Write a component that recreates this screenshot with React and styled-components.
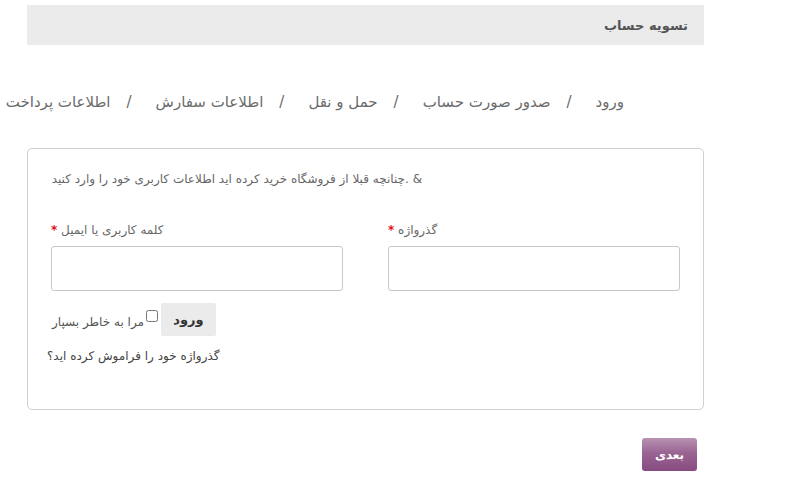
import styled, { createGlobalStyle } from 'styled-components';

const GlobalStyle = createGlobalStyle`
    html, body {
        margin: 0;
        padding: 0;
        background: #ffffff;
    }
    body {
        font-family: Tahoma, "DejaVu Sans", sans-serif;
        color: #666;
    }
`;

const steps = ['ورود', 'صدور صورت حساب', 'حمل و نقل', 'اطلاعات سفارش', 'اطلاعات پرداخت'];

const App = () => {
    return (
        <Page>
            <GlobalStyle />
            <TitleBar>
                <h2>تسویه حساب</h2>
            </TitleBar>

            <Steps>
                {steps.map((s, i) => (
                    <Step key={s}>
                        {i > 0 && <Sep>/</Sep>}
                        <span>{s}</span>
                    </Step>
                ))}
            </Steps>

            <Box>
                <Intro>&amp; .چنانچه قبلا از فروشگاه خرید کرده اید اطلاعات کاربری خود را وارد کنید</Intro>
                <Fields>
                    <Field>
                        <Label><Star>*</Star> کلمه کاربری یا ایمیل</Label>
                        <Input type="text" />
                    </Field>
                    <Field>
                        <Label><Star>*</Star> گذرواژه</Label>
                        <Input type="password" />
                    </Field>
                </Fields>
                <LoginRow>
                    <span>مرا به خاطر بسپار</span>
                    <Check type="checkbox" />
                    <LoginButton>ورود</LoginButton>
                </LoginRow>
                <Forgot href="#">گذرواژه خود را فراموش کرده اید؟</Forgot>
            </Box>

            <Footer>
                <Next>بعدی</Next>
            </Footer>
        </Page>
    );
};

const Page = styled.div`
    width: 811px;
    padding-top: 5px;
`;

const TitleBar = styled.div`
    margin-left: 27px;
    width: 677px;
    height: 40px;
    background: #ebebeb;
    display: flex;
    align-items: center;
    justify-content: flex-end;
    h2 {
        margin: 0 16px 0 0;
        font-size: 13px;
        font-weight: bold;
        color: #555;
        direction: rtl;
    }
`;

const Steps = styled.div`
    display: flex;
    flex-direction: row-reverse;
    justify-content: flex-start;
    width: 624px;
    margin-top: 40px;
    height: 34px;
    align-items: center;
    white-space: nowrap;
    font-size: 15px;
    color: #6b6b6b;
`;

const Step = styled.div`
    display: flex;
    flex-direction: row-reverse;
    align-items: center;
    span {
        direction: rtl;
    }
`;

const Sep = styled.i`
    font-style: normal;
    margin: 0 24px 0 16px;
    font-size: 15px;
`;

const Box = styled.div`
    margin: 29px 0 0 27px;
    width: 677px;
    height: 262px;
    box-sizing: border-box;
    border: 1px solid #cfcfcf;
    border-radius: 5px;
    padding: 21px 23px 0 23px;
`;

const Intro = styled.p`
    margin: 0;
    width: 371px;
    direction: rtl;
    text-align: right;
    font-size: 12px;
    line-height: 18px;
    color: #666;
`;

const Fields = styled.div`
    display: grid;
    grid-template-columns: 292px 292px;
    column-gap: 45px;
    margin-top: 33px;
`;

const Field = styled.div`
    display: flex;
    flex-direction: column;
`;

const Label = styled.label`
    font-size: 12px;
    line-height: 18px;
    color: #666;
    margin-bottom: 7px;
`;

const Star = styled.span`
    color: #e0101a;
    font-weight: bold;
`;

const Input = styled.input`
    box-sizing: border-box;
    width: 292px;
    height: 45px;
    border: 1px solid #c8c8c8;
    border-radius: 3px;
    background: #fff;
    outline: none;
`;

const LoginRow = styled.div`
    display: flex;
    align-items: center;
    margin-top: 12px;
    margin-left: 1px;
    font-size: 12px;
    color: #555;
    span {
        direction: rtl;
        margin-top: 5px;
    }
`;

const Check = styled.input`
    width: 12px;
    height: 12px;
    margin: 7px 3px 0 2px;
    align-self: flex-start;
`;

const LoginButton = styled.button`
    width: 55px;
    height: 33px;
    border: none;
    border-radius: 2px;
    background: #ebebeb;
    font-family: Tahoma, "DejaVu Sans", sans-serif;
    font-size: 13px;
    font-weight: bold;
    color: #333;
    cursor: pointer;
`;

const Forgot = styled.a`
    display: block;
    margin-top: 13px;
    margin-left: -4px;
    width: max-content;
    direction: rtl;
    font-size: 12px;
    color: #444;
    text-decoration: none;
`;

const Footer = styled.div`
    width: 697px;
    display: flex;
    justify-content: flex-end;
    margin-top: 28px;
`;

const Next = styled.button`
    width: 55px;
    height: 33px;
    border: none;
    border-radius: 3px;
    background: linear-gradient(to bottom, #b892b2 0%, #9a6493 45%, #874b80 100%);
    color: #fff;
    font-family: Tahoma, "DejaVu Sans", sans-serif;
    font-size: 12px;
    font-weight: bold;
    cursor: pointer;
`;

export default App;
